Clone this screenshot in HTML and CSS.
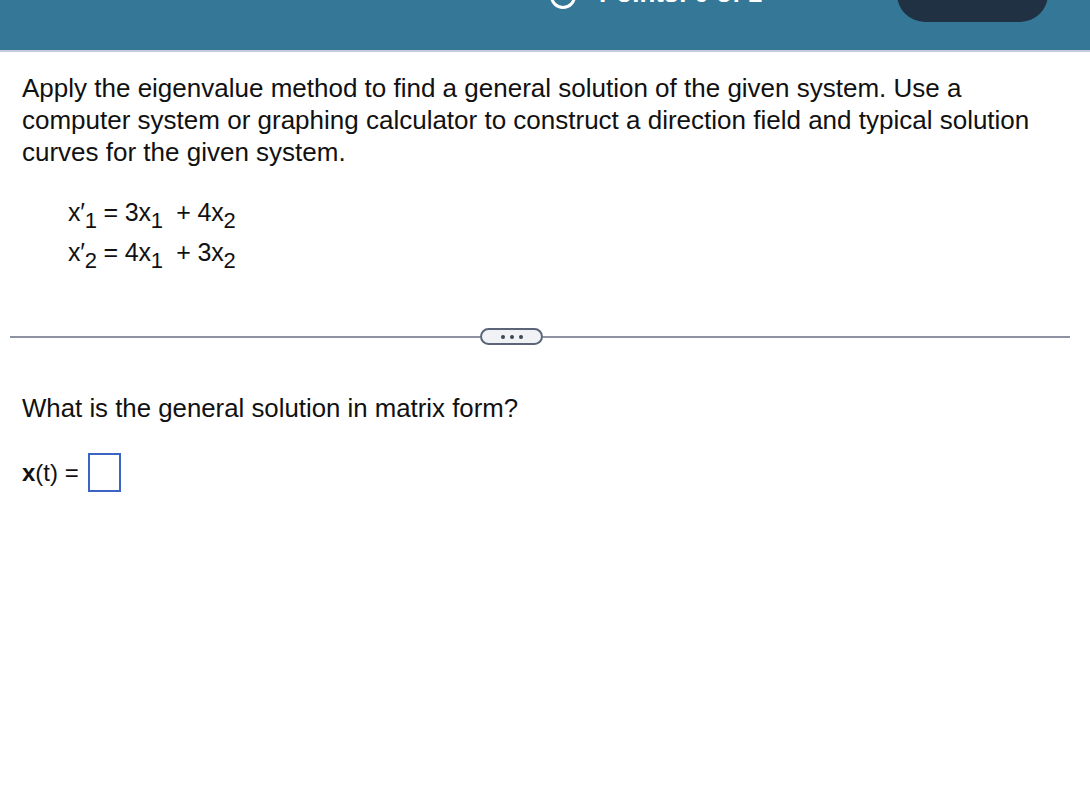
FILE: index.html
```html
<!DOCTYPE html>
<html>
<head>
<meta charset="utf-8">
<link rel="stylesheet" href="styles.css">
</head>
<body>
<header class="topbar">
  <div class="topbar-inner">
    <div class="points">
      <svg class="ring" width="28" height="28" viewBox="0 0 28 28"><circle cx="14" cy="14" r="11.5" fill="none" stroke="#fff" stroke-width="3"/></svg>
      <span class="points-text">Points: 0 of 1</span>
    </div>
    <div class="save-btn"></div>
  </div>
</header>
<main class="content">
  <p class="prompt">Apply the eigenvalue method to find a general solution of the given system. Use a computer system or graphing calculator to construct a direction field and typical solution curves for the given system.</p>
  <div class="system">
    <div class="eq">x′<sub>1</sub> = 3x<sub>1</sub> &nbsp;+ 4x<sub>2</sub></div>
    <div class="eq">x′<sub>2</sub> = 4x<sub>1</sub> &nbsp;+ 3x<sub>2</sub></div>
  </div>
  <div class="divider">
    <span class="line left"></span>
    <span class="more"><i></i><i></i><i></i></span>
    <span class="line"></span>
  </div>
  <p class="question">What is the general solution in matrix form?</p>
  <div class="answer"><span class="lbl"><b>x</b>(t) =</span><span class="box"></span></div>
</main>
</body>
</html>
```
FILE: styles.css
```css
html, body { margin: 0; padding: 0; background: #fff; }
body { font-family: "Liberation Sans", Arial, sans-serif; color: #111; }
.topbar { height: 50px; background: #357797; border-bottom: 2px solid #c5cbdc; overflow: hidden; }
.topbar-inner { display: flex; align-items: flex-end; height: 22px; }
.points { display: flex; align-items: flex-end; margin-left: 549px; margin-bottom: 20px; gap: 22px; }
.ring { display: block; margin-bottom: -8px; }
.points-text { color: #fff; font-size: 26px; font-weight: bold; line-height: 1; margin-bottom: -4px; }
.save-btn { margin-left: auto; margin-right: 42px; width: 151px; height: 44px; background: #1f3142; border-radius: 0 0 28px 28px; align-self: flex-end; }
.content { padding: 0 22px; }
.prompt { margin: 20px 0 0; font-size: 26px; line-height: 32px; }
.system { margin: 24px 0 0 46px; }
.eq { font-size: 25px; line-height: 40px; letter-spacing: -0.2px; }
.eq sub { font-size: 22px; vertical-align: -7px; line-height: 0; }
.divider { display: flex; align-items: center; margin: 56px -2px 0 -12px; }
.line { flex: 1; height: 2px; background: #8e93a3; }
.line.left { flex: 0 0 470px; }
.more { width: 59px; height: 13px; border: 2px solid #5b6478; border-radius: 9px; background: #f0f2f5; display: flex; justify-content: center; align-items: center; gap: 5px; }
.more i { width: 4px; height: 4px; border-radius: 50%; background: #3d4452; }
.question { margin: 48px 0 0; font-size: 25.8px; line-height: 30px; }
.answer { display: flex; align-items: center; margin-top: 30px; font-size: 24px; }
.lbl { margin-right: 9px; }
.box { width: 29px; height: 35px; border: 2px solid #3b64c4; }
```
